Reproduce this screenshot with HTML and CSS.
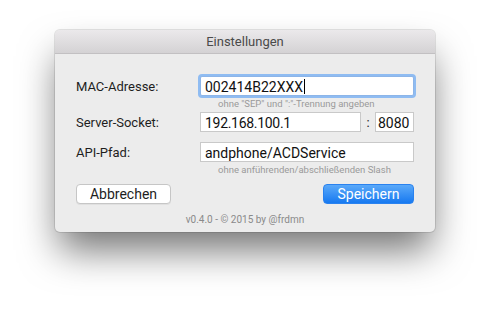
FILE: index.html
```html
<!DOCTYPE html>
<html lang="de">
<head>
    <meta charset="UTF-8">
    <meta name="viewport" content="width=device-width, initial-scale=1.0">
    <title>Einstellungen</title>
    <link rel="stylesheet" href="styles.css">
</head>
<body>
    <div class="window">
        <div class="titlebar">Einstellungen</div>
        <div class="content">
            <form class="settings">
                <label class="label" for="mac">MAC-Adresse:</label>
                <div class="field focused" id="mac">002414B22XXX<span class="caret"></span></div>
                <div class="hint">ohne "SEP" und ":"-Trennung angeben</div>

                <label class="label" for="host">Server-Socket:</label>
                <div class="socket">
                    <div class="field host" id="host">192.168.100.1</div>
                    <span class="colon">:</span>
                    <div class="field port">8080</div>
                </div>

                <label class="label label-api" for="api">API-Pfad:</label>
                <div class="field field-api" id="api">andphone/ACDService</div>
                <div class="hint">ohne anführenden/abschließenden Slash</div>
            </form>
            <div class="buttons">
                <button type="button" class="btn btn-cancel">Abbrechen</button>
                <button type="button" class="btn btn-save">Speichern</button>
            </div>
            <div class="footer">v0.4.0 - © 2015 by @frdmn</div>
        </div>
    </div>
</body>
</html>
```

FILE: styles.css
```css
html {
    height: 100%;
    background-color: #fff;
}

body {
    margin: 0;
    min-height: 100%;
    box-sizing: border-box;
    padding: 30px 0 0 55px;
    font-family: Roboto, "Liberation Sans", sans-serif;
    color: #1e1e1e;
}

.window {
    width: 380px;
    background-color: #ececec;
    border-radius: 5px;
    box-shadow: 0 22px 38px -4px rgba(0, 0, 0, 0.55), 0 0 0 1px rgba(0, 0, 0, 0.1);
}

.titlebar {
    height: 23px;
    line-height: 23px;
    text-align: center;
    font-size: 13px;
    color: #4a4a4a;
    background: linear-gradient(#ebe9eb, #d4d2d4);
    border-bottom: 1px solid #c2c0c2;
    border-radius: 5px 5px 0 0;
}

.content {
    padding: 22px 21px 4px 21px;
}

.settings {
    display: grid;
    grid-template-columns: 124px 1fr;
    align-items: center;
}

.label {
    font-size: 13px;
    color: #1e1e1e;
}

.label-api {
    margin-top: 10px;
}

.field {
    height: 20px;
    line-height: 20px;
    box-sizing: border-box;
    padding: 0 4px;
    background-color: #fff;
    border: 1px solid #c9c9c9;
    font-size: 14px;
    color: #111;
    white-space: nowrap;
}

.field-api {
    margin-top: 10px;
}

.focused {
    border-color: #8db5e8;
    box-shadow: 0 0 0 2px #8fbcf2;
    border-radius: 2px;
}

.caret {
    display: inline-block;
    width: 1px;
    height: 15px;
    margin-left: 1px;
    vertical-align: -2px;
    background-color: #000;
}

.socket {
    display: flex;
    align-items: center;
}

.host {
    flex: 1;
    letter-spacing: -0.3px;
}

.colon {
    width: 14px;
    text-align: center;
    font-size: 13px;
}

.port {
    width: 39px;
    padding: 0 2px;
}

.hint {
    grid-column: 2;
    height: 16px;
    line-height: 15px;
    padding-left: 18px;
    font-size: 9.5px;
    color: #9a9a9a;
}

.buttons {
    display: flex;
    justify-content: space-between;
    margin-top: 6px;
}

.btn {
    height: 20px;
    padding: 0;
    border-radius: 4px;
    font-family: Roboto, "Liberation Sans", sans-serif;
    font-size: 14px;
    line-height: 18px;
    cursor: pointer;
}

.btn-cancel {
    width: 95px;
    background-color: #fff;
    border: 1px solid #c6c6c6;
    box-shadow: 0 1px 0 rgba(0, 0, 0, 0.05);
    color: #1e1e1e;
}

.btn-save {
    width: 91px;
    background: linear-gradient(#5aa9f9, #1779f0);
    border: 1px solid #2a82ef;
    color: #fff;
}

.footer {
    margin-top: 8px;
    line-height: 16px;
    text-align: center;
    font-size: 10px;
    color: #8a8a8a;
}
```
